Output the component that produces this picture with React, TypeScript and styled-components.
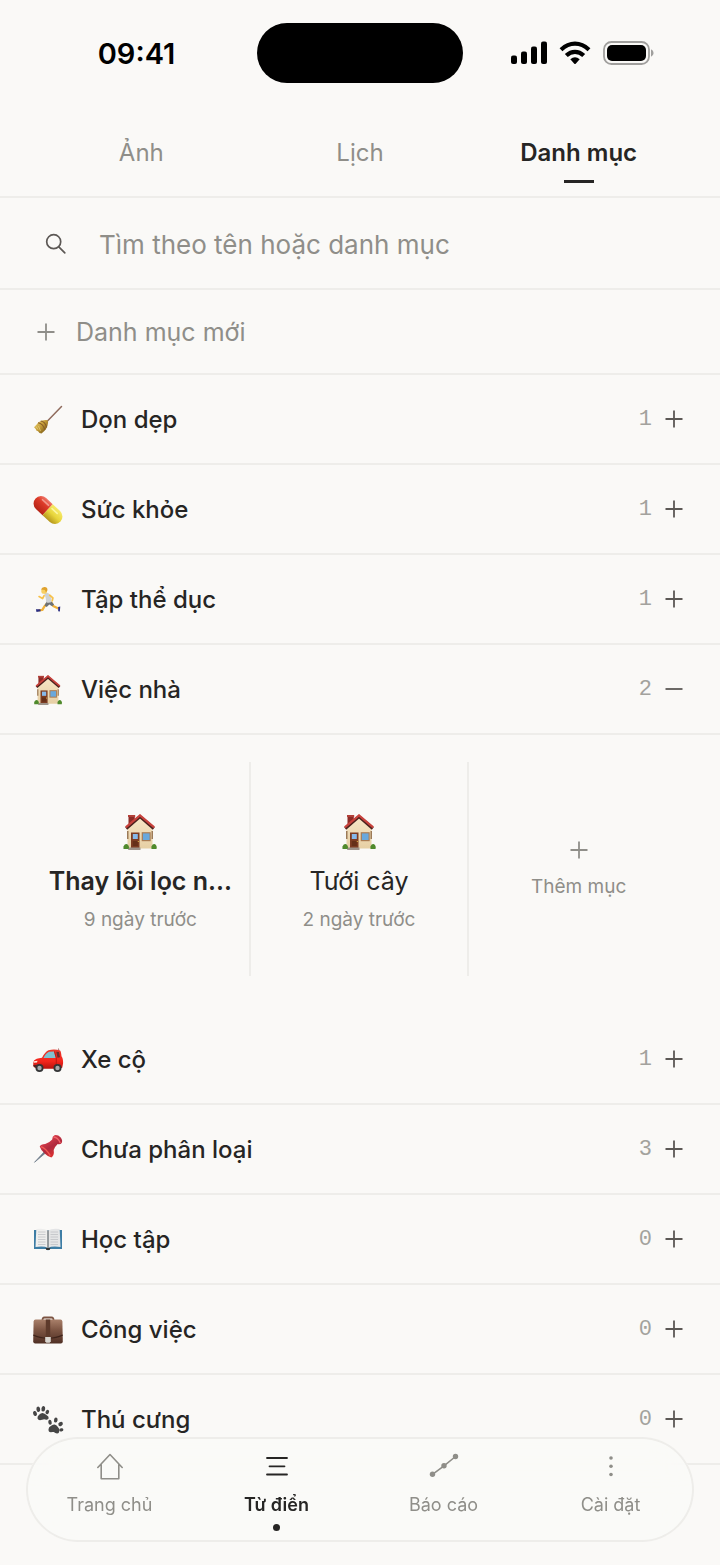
import React, { useId, useState } from "react";
import styled, { createGlobalStyle, css } from "styled-components";

const color = {
  page: "#faf9f7",
  line: "#eeedea",
  ink: "#262524",
  muted: "#8f8e89",
  icon: "#5c5855",
};

const GlobalStyle = createGlobalStyle`
  *, *::before, *::after { box-sizing: border-box; }
  body {
    margin: 0;
    background: ${color.page};
    color: ${color.ink};
    font-family: Inter, "Liberation Sans", sans-serif;
    font-size: 24px;
    line-height: 32px;
  }
  button, input { font: inherit; color: inherit; }
  button { padding: 0; border: 0; background: none; cursor: pointer; }
  ul { list-style: none; margin: 0; padding: 0; }
  svg { display: block; flex: none; }
`;

const Page = styled.div`
  display: flex;
  flex-direction: column;
  min-height: 100vh;
  padding-bottom: 100px;
`;

const StatusBar = styled.header`
  display: grid;
  grid-template-columns: 1fr auto 1fr;
  align-items: center;
  justify-items: center;
  padding: 23px 18px 24px;
  color: #000;
`;

const Clock = styled.time`
  padding: 2px 2px 0 0;
  font-size: 29px;
  font-weight: 600;
`;

const Island = styled.div`
  width: 206px;
  height: 60px;
  border-radius: 30px;
  background: #000;
`;

const StatusIcons = styled.div`
  display: flex;
  align-items: center;
  gap: 12px;
`;

const Tabs = styled.nav`
  display: grid;
  grid-template-columns: repeat(3, 1fr);
  padding: 0 32px;
  border-bottom: 2px solid ${color.line};
`;

const Tab = styled.button<{ $active: boolean }>`
  display: flex;
  flex-direction: column;
  align-items: center;
  gap: 11px;
  padding: 30px 0 13px;
  color: ${(p) => (p.$active ? color.ink : color.muted)};
  font-weight: ${(p) => (p.$active ? 600 : 400)};

  &::after {
    content: "";
    width: 30px;
    height: 3px;
    background: ${(p) => (p.$active ? color.ink : "transparent")};
  }
`;

const SearchRow = styled.label`
  display: flex;
  align-items: center;
  gap: 32px;
  height: 92px;
  padding: 2px 32px 0 45px;
  border-bottom: 2px solid ${color.line};
`;

const SearchInput = styled.input`
  flex: 1;
  min-width: 0;
  padding: 2px 0 0;
  border: 0;
  outline: 0;
  background: none;
  font-size: 26px;

  &::placeholder { color: ${color.muted}; opacity: 1; }
`;

const NewCategory = styled.button`
  display: flex;
  align-items: center;
  gap: 21px;
  height: 85px;
  padding: 0 37px;
  border-bottom: 2px solid ${color.line};
  color: ${color.muted};
  font-size: 25px;
`;

const CategoryRow = styled.button`
  display: flex;
  align-items: center;
  width: 100%;
  height: 90px;
  padding: 0 37px 0 32px;
  border-bottom: 2px solid ${color.line};
  text-align: left;
`;

const CategoryLabel = styled.span`
  display: flex;
  flex: 1;
  align-items: center;
  gap: 17px;
  padding-top: 2px;
  font-weight: 500;
`;

const Pictogram = styled.span`
  display: flex;
  align-items: center;
  justify-content: center;
  width: 32px;
  height: 32px;
`;

const Count = styled.span`
  margin-right: 13px;
  padding-top: 2px;
  color: #a3a29d;
  font-family: "Liberation Mono", monospace;
  font-size: 22px;
`;

const Signs = styled.span`
  color: ${color.icon};
`;

const ItemGrid = styled.ul`
  display: grid;
  grid-template-columns: repeat(3, 1fr);
  padding: 27px 32px 39px;
`;

const ItemCell = styled.li`
  min-width: 0;
  height: 214px;

  &:not(:last-child) { border-right: 2px solid ${color.line}; }
`;

const ItemButton = styled.button`
  display: flex;
  flex-direction: column;
  align-items: center;
  justify-content: center;
  width: 100%;
  height: 100%;
  padding: 10px 12px 0;
`;

const ItemName = styled.span<{ $strong?: boolean }>`
  margin: 15px 0 9px;
  white-space: nowrap;
  font-size: 25px;
  font-weight: ${(p) => (p.$strong ? 600 : 400)};
`;

const Caption = styled.span`
  color: ${color.muted};
  font-size: 19px;
  line-height: 28px;
`;

const AddCell = styled(ItemButton)`
  gap: 14px;
  padding-top: 4px;
  color: ${color.muted};
`;

const BottomNav = styled.nav`
  position: fixed;
  right: 26px;
  bottom: 23px;
  left: 26px;
  display: grid;
  grid-template-columns: repeat(4, 1fr);
  height: 105px;
  border-radius: 53px;
  background: rgba(250, 249, 247, 0.9);
  box-shadow: inset 0 0 0 2px ${color.line};
  backdrop-filter: blur(20px);
`;

const NavItem = styled.a<{ $active?: boolean }>`
  display: flex;
  flex-direction: column;
  align-items: center;
  padding-top: 13px;
  color: ${color.muted};
  font-size: 18px;
  line-height: 24px;
  text-decoration: none;

  svg { margin-bottom: 11px; }

  ${(p) =>
    p.$active &&
    css`
      color: ${color.ink};
      font-weight: 600;

      &::after {
        content: "";
        width: 7px;
        height: 7px;
        margin-top: 7px;
        border-radius: 50%;
        background: ${color.ink};
      }
    `}
`;

/* ---------- line icons ---------- */

const Plus = ({ minus = false }: { minus?: boolean }) => (
  <svg width="18" height="18" viewBox="0 0 18 18" fill="none" stroke="currentColor" strokeWidth="1.8" aria-hidden="true">
    <path d={minus ? "M0.5 9h17" : "M0.5 9h17M9 0.5v17"} />
  </svg>
);

const SearchIcon = () => (
  <svg width="22" height="22" viewBox="0 0 22 22" fill="none" stroke={color.icon} strokeWidth="1.7" strokeLinecap="round" aria-hidden="true">
    <circle cx="8.7" cy="8.7" r="7" />
    <path d="M13.8 13.8l6 6" />
  </svg>
);

const Signal = () => (
  <svg width="36" height="24" viewBox="0 0 36 24" aria-hidden="true">
    <rect x="0" y="14.5" width="6" height="8.5" rx="2" />
    <rect x="10" y="10.5" width="6" height="12.5" rx="2" />
    <rect x="20" y="5.5" width="6" height="17.5" rx="2" />
    <rect x="30" y="0.5" width="6" height="22.5" rx="2" />
  </svg>
);

const Wifi = () => (
  <svg width="32" height="24" viewBox="0 0 32 24" fill="none" stroke="#000" strokeWidth="4.2" aria-hidden="true">
    <path d="M2 8.7Q8.5 2.7 16 2.7T30 8.7" />
    <path d="M7.3 14.6Q11.2 10.8 16 10.8T24.7 14.6" />
    <path d="M11.3 18.3Q16 14.4 20.7 18.3L16.7 22.8Q16 23.4 15.3 22.8Z" fill="#000" stroke="none" />
  </svg>
);

const Battery = () => (
  <svg width="51" height="24" viewBox="0 0 51 24" aria-hidden="true">
    <rect x="1" y="1" width="45" height="22" rx="7.5" fill="none" stroke="#a09f9d" strokeWidth="1.8" />
    <rect x="4" y="4" width="39" height="16" rx="5" />
    <path d="M48 8.3q2.6 1 2.6 3.7t-2.6 3.7z" fill="#a09f9d" />
  </svg>
);

const HomeIcon = () => (
  <svg width="28" height="32" viewBox="0 0 28 32" fill="none" stroke="currentColor" strokeWidth="1.6" strokeLinejoin="round" strokeLinecap="round" aria-hidden="true">
    <path d="M1.8 17.5L14 4.5l12.2 13M5.2 14.5v14.3h17.6V14.500" />
  </svg>
);

const ListIcon = () => (
  <svg width="28" height="32" viewBox="0 0 28 32" fill="none" stroke="currentColor" strokeWidth="1.8" strokeLinecap="round" aria-hidden="true">
    <path d="M4 8h20M6.5 16.3h15M4 24.500h20" />
  </svg>
);

const ChartIcon = () => (
  <svg width="32" height="32" viewBox="0 0 32 32" fill="currentColor" aria-hidden="true">
    <path d="M4.5 24.3L16 15.8 27.5 6.5" fill="none" stroke="currentColor" strokeWidth="1.6" />
    <circle cx="4.5" cy="24.3" r="2.7" />
    <circle cx="16" cy="15.8" r="2.7" />
    <circle cx="27.5" cy="6.5" r="2.7" />
  </svg>
);

const DotsIcon = () => (
  <svg width="28" height="32" viewBox="0 0 28 32" fill="currentColor" aria-hidden="true">
    <circle cx="14" cy="8" r="1.8" />
    <circle cx="14" cy="16.3" r="1.8" />
    <circle cx="14" cy="24.5" r="1.8" />
  </svg>
);

/* ---------- pictograms ---------- */

const Broom = () => {
  const id = useId();
  return (
    <svg width="32" height="32" viewBox="0 0 32 32" aria-hidden="true">
      <defs>
        <linearGradient id={id} x1="4" y1="18" x2="14" y2="27" gradientUnits="userSpaceOnUse">
          <stop offset="0" stopColor="#e3c765" />
          <stop offset="0.5" stopColor="#c29a36" />
          <stop offset="1" stopColor="#80601a" />
        </linearGradient>
      </defs>
      <path d="M29.5 2.500L14.5 18" stroke="#8f6b5c" strokeWidth="1.5" strokeLinecap="round" />
      <path d="M14.5 16q2.2 1 1.400 3.500-.4 5.500-6.400 10l-2-.6-1.500-1.600-1.700-.7-.6-1.600L2 23.300q2-1.800 4.500-5 3.500-2.500 8-2.300z" fill={`url(#${id})`} />
      <path d="M6 18.800q5 .8 7 7.200M8.700 17q4.500.7 6 6.500" fill="none" stroke="#8a5f2a" strokeWidth="1.1" />
      <path d="M4 22.500l2 3M6.500 22l2 5" stroke="#f2de8c" strokeWidth=".6" />
    </svg>
  );
};

const Pill = () => {
  const id = useId();
  return (
    <svg width="32" height="32" viewBox="0 0 32 32" aria-hidden="true">
      <defs>
        <linearGradient id={`${id}r`} x1="0" y1="0" x2="0" y2="1">
          <stop offset="0" stopColor="#f0786a" />
          <stop offset="0.4" stopColor="#dc3a28" />
          <stop offset="1" stopColor="#b62416" />
        </linearGradient>
        <linearGradient id={`${id}y`} x1="0" y1="0" x2="0" y2="1">
          <stop offset="0" stopColor="#f7ea6a" />
          <stop offset="0.5" stopColor="#e8d63c" />
          <stop offset="1" stopColor="#b5961c" />
        </linearGradient>
      </defs>
      <g transform="rotate(43 16 16)">
        <path d="M15.500 8.500H6.500a7.500 7.500 0 0 0 0 15h9z" fill={`url(#${id}r)`} />
        <path d="M15.500 8.500H25.500a7.500 7.500 0 0 1 0 15h-10z" fill={`url(#${id}y)`} />
        <path d="M5 12.200h8" stroke="#f39a8d" strokeWidth="1.6" strokeLinecap="round" />
        <path d="M18 12.200h7" stroke="#fbf5a0" strokeWidth="1.6" strokeLinecap="round" />
      </g>
    </svg>
  );
};

const Runner = () => (
  <svg width="32" height="32" viewBox="-3 -3 37 37" aria-hidden="true">
    <path d="M15.500 18.500l-4 4.200-2.500 4.200-4.500.6M19 18l2.500 4.500 6 2.800" fill="none" stroke="#f0b13a" strokeWidth="2.700" strokeLinejoin="round" />
    <path d="M14 17l5.500.2 3 3.600-2.200 2-3.300-2.200-3 3-2.500-1.600z" fill="#6e7276" />
    <path d="M11 8q3.500-1.800 6 .5l2.500 4.800-.5 4.900q-3 1-5.500-.2L12.800 13z" fill="#cfd2d4" />
    <path d="M11 10.500l-1.800 3.300-4-2.300M17.500 10l3.700 3-.8 3.400" fill="none" stroke="#f7c14a" strokeWidth="2" strokeLinecap="round" strokeLinejoin="round" />
    <circle cx="11" cy="5" r="3.300" fill="#f8cf63" />
    <path d="M7.500 3.500q.8-3 4-2.900 3.500.2 3.400 3.500l-1.700 2.700-1.300-2.800z" fill="#dfa22d" />
    <path d="M1.500 26.300l5-.2.7 2.500-5 .8zM27.200 23.500l2.500-.4-.5 5.600-1.900-.2z" fill="#2c2f82" />
  </svg>
);

const House = ({ size }: { size: number }) => {
  const id = useId();
  return (
    <svg width={size} height={size} viewBox="0 0 34 36" aria-hidden="true">
      <defs>
        <linearGradient id={id} x1="0" y1="0" x2="0" y2="1">
          <stop offset="0" stopColor="#f7e6c6" />
          <stop offset="1" stopColor="#e6cfa4" />
        </linearGradient>
      </defs>
      <path d="M5.500 1.500h6.300v9l-6.300 4.500z" fill="#8e2b26" />
      <path d="M5 1h7.200v2H5z" fill="#b23f38" />
      <path d="M4.500 14.500L17 3.500l12.500 11v20h-25z" fill={`url(#${id})`} />
      <path d="M4 17h1.500v8H4zM28.500 17H30v8h-1.500z" fill="#9c7b58" />
      <path d="M3.200 14.500L17 2.700l13.800 11.800" fill="none" stroke="#4c211d" strokeWidth="3" />
      <path d="M2.800 13.300L17 1.400l14.200 11.900" fill="none" stroke="#c8423c" strokeWidth="2.200" />
      <rect x="8" y="18.500" width="8.500" height="15.500" fill="#7c3c22" />
      <rect x="9.800" y="20" width="5" height="5" fill="#86b9ea" />
      <rect x="9.800" y="27" width="5" height="5" fill="#653019" />
      <circle cx="15.300" cy="27.500" r=".6" fill="#f0c84d" />
      <rect x="18.700" y="18.200" width="9" height="9" fill="#a97b52" />
      <rect x="19.900" y="19.400" width="6.700" height="6.600" fill="#69a8dc" />
      <path d="M6 33.500h11.500V36H5z" fill="#9d938a" />
      <path d="M0.500 35q-.8-3 1.300-4.500 2-1.300 3.500.8 1.300 1.800.4 3.700zM28.500 35q-.8-3 1.200-4.500 2-1.200 3.400.8 1.200 1.800.4 3.700z" fill="#4f8a2c" />
    </svg>
  );
};

const Car = () => {
  const id = useId();
  return (
    <svg width="32" height="32" viewBox="0 0 32 32" aria-hidden="true">
      <defs>
        <linearGradient id={id} x1="0" y1="0" x2="0" y2="1">
          <stop offset="0" stopColor="#e8372a" />
          <stop offset="0.6" stopColor="#f5261d" />
          <stop offset="1" stopColor="#b5120e" />
        </linearGradient>
      </defs>
      <path d="M26.500 4.500l.6 4" stroke="#8a3a36" strokeWidth=".7" />
      <path d="M2 16.500q1.500-2 8-2.800 3-6 6.500-7.500 6-1.300 11.500.2 1 .6 1.500 5.800 1.700 2 1.600 7l-.9 4.500L27 24.800H4.500L1.300 22.300q-.3-4 .7-5.800z" fill={`url(#${id})`} />
      <path d="M11.500 14q2.300-4.800 5.500-6.200l5-.2 1.800 6.400z" fill="#7fc0cf" />
      <path d="M24.300 7.800l2.700.2 1 5.300-2.500.5z" fill="#6a2b2c" />
      <path d="M22.500 7.500l1.800 6.500v8" stroke="#b91510" strokeWidth=".9" fill="none" />
      <path d="M1.300 21h4v2.200H2z" fill="#59201c" />
      <path d="M2 17.300l3.500-.6-.5 1.800-3 .3z" fill="#ffe9dc" />
      <g>
        <circle cx="7.500" cy="24" r="4" fill="#343536" />
        <circle cx="7.500" cy="24" r="2.200" fill="#a6a8aa" />
        <circle cx="25.500" cy="24" r="4" fill="#343536" />
        <circle cx="25.500" cy="24" r="2.200" fill="#a6a8aa" />
      </g>
    </svg>
  );
};

const Pushpin = () => {
  const id = useId();
  return (
    <svg width="32" height="32" viewBox="0 0 32 32" aria-hidden="true">
      <defs>
        <linearGradient id={id} x1="10" y1="6" x2="22" y2="24" gradientUnits="userSpaceOnUse">
          <stop offset="0" stopColor="#e2414c" />
          <stop offset="0.5" stopColor="#b02a3e" />
          <stop offset="1" stopColor="#e8322c" />
        </linearGradient>
      </defs>
      <path d="M12.500 17.500L2.500 28.300l11.300-9.500z" fill="#6c7a88" stroke="#6c7a88" strokeWidth=".7" />
      <path d="M7.700 12.500q1-2.500 5.500-2.600 4.500-1.300 7-4.400 0-3.200 2.300-4.300 3.500-.6 6 2.100 2.500 2.900 1.200 5.700-1.500 1.700-4 1-3.200 3-4 6 .8 5.500-2.300 7.400-3-.2-6.500-3.600-4.200-3.800-5.200-7.300z" fill={`url(#${id})`} />
      <path d="M21.500 3q4.500.3 6.800 6" fill="none" stroke="#f1656a" strokeWidth="1.300" />
      <path d="M9 12.700q5 1.800 9.300 9" fill="none" stroke="#f25b55" strokeWidth="1.400" />
    </svg>
  );
};

const Book = () => (
  <svg width="32" height="32" viewBox="0 0 32 32" aria-hidden="true">
    <path d="M2 6h28v19H17.500L16 26.500 14.500 25H2z" fill="#3d7da5" />
    <path d="M13.500 23.800h5l-.8 2.200h-3.400z" fill="#303536" />
    <path d="M4.300 5Q12 4 16 6.500v17.500q-4-2.300-12.500-1z" fill="#eeeeed" />
    <path d="M27.700 5Q20 4 16 6.500v17.500q4-2.300 12.500-1z" fill="#e4e5e6" />
    <path d="M16 6.500v17.500" stroke="#7a8084" strokeWidth="1.500" />
    <path d="M6 8h7.500M6 10.500h7.500M6 13h7.500M6 15.500h7.500M6 18h7.500M6 20.500h7.500M18.500 8H26M18.500 10.500H26M18.500 13H26M18.500 15.500H26M18.500 18H26M18.500 20.500H26" stroke="#bfc2c5" strokeWidth=".8" />
  </svg>
);

const Briefcase = () => {
  const id = useId();
  return (
    <svg width="32" height="32" viewBox="0 0 32 32" aria-hidden="true">
      <defs>
        <linearGradient id={id} x1="0" y1="0" x2="0" y2="1">
          <stop offset="0" stopColor="#a9806a" />
          <stop offset="0.45" stopColor="#7c5442" />
          <stop offset="1" stopColor="#4f2f24" />
        </linearGradient>
      </defs>
      <path d="M10.500 6.500q-.2-3 2-3h7q2.200 0 2 3" fill="none" stroke="#7c5442" strokeWidth="1.800" />
      <path d="M3.500 5.500h25q1.700.2 1.900 2l.4 20q-.1 2-2 2.100H3.200q-1.900-.1-2-2.100l.4-20q.2-1.800 1.900-2z" fill={`url(#${id})`} />
      <path d="M1.300 21q6 3.200 14.700 3.200t14.700-3.200" fill="none" stroke="#3f241b" strokeWidth="1.200" />
      <path d="M13.800 5.500h4.400v17.500h-4.400z" fill="#5d3a2b" />
      <path d="M13.200 23h5.600v4.500l-1.200 1.300h-3.200l-1.200-1.300z" fill="#d9d6d0" />
    </svg>
  );
};

const Paws = () => (
  <svg width="32" height="32" viewBox="0 0 32 32" fill="#464646" aria-hidden="true">
    <path d="M5.500 14.500q-.4-1.900 1.600-3.700 1.600-1.900 3.500-1.900 2.200.2 3.800 2.100 2.600 1.400 2.300 3.300-.8 1.900-3.400 1.100-1.700-.4-3.200.4-3.600 1.300-4.600-1.300z" />
    <ellipse cx="3" cy="9.500" rx="1.900" ry="2.600" transform="rotate(-18 3 9.500)" />
    <ellipse cx="6.300" cy="5.200" rx="1.900" ry="2.800" transform="rotate(-8 6.300 5.200)" />
    <ellipse cx="11.300" cy="4.700" rx="1.900" ry="2.800" transform="rotate(8 11.300 4.700)" />
    <ellipse cx="15.300" cy="8" rx="1.700" ry="2.300" transform="rotate(25 15.300 8)" />
    <path d="M16.500 25.200q.2-2 2.300-3.100 1.800-1.900 3.700-1.700 2 .3 3.200 2.300 2 1.700 1.600 4.300-.2 2.800-2.300 2.600-1.700-.5-3.200-1.500-1.500-.3-3 .1-2.500-.2-2.300-3z" />
    <ellipse cx="18" cy="18.300" rx="1.700" ry="2.500" transform="rotate(-12 18 18.300)" />
    <ellipse cx="23.800" cy="16" rx="1.800" ry="2.600" transform="rotate(10 23.800 16)" />
    <ellipse cx="28.600" cy="20" rx="2.400" ry="1.900" transform="rotate(-30 28.600 20)" />
    <ellipse cx="29.300" cy="25.800" rx="2.100" ry="1.600" transform="rotate(-10 29.300 25.800)" />
  </svg>
);

/* ---------- data ---------- */

interface Category {
  name: string;
  count: number;
  icon: React.ReactNode;
}

const categories: Category[] = [
  { name: "Dọn dẹp", count: 1, icon: <Broom /> },
  { name: "Sức khỏe", count: 1, icon: <Pill /> },
  { name: "Tập thể dục", count: 1, icon: <Runner /> },
  { name: "Việc nhà", count: 2, icon: <House size={30} /> },
  { name: "Xe cộ", count: 1, icon: <Car /> },
  { name: "Chưa phân loại", count: 3, icon: <Pushpin /> },
  { name: "Học tập", count: 0, icon: <Book /> },
  { name: "Công việc", count: 0, icon: <Briefcase /> },
  { name: "Thú cưng", count: 0, icon: <Paws /> },
];

const houseItems = [
  { name: "Thay lõi lọc n...", when: "9 ngày trước", overdue: true },
  { name: "Tưới cây", when: "2 ngày trước", overdue: false },
];

const tabs = ["Ảnh", "Lịch", "Danh mục"];

const navItems = [
  { label: "Trang chủ", icon: <HomeIcon /> },
  { label: "Từ điển", icon: <ListIcon />, active: true },
  { label: "Báo cáo", icon: <ChartIcon /> },
  { label: "Cài đặt", icon: <DotsIcon /> },
];

export default function App() {
  const [tab, setTab] = useState("Danh mục");
  const [open, setOpen] = useState("Việc nhà");

  return (
    <Page>
      <GlobalStyle />
      <StatusBar>
        <Clock>09:41</Clock>
        <Island />
        <StatusIcons>
          <Signal />
          <Wifi />
          <Battery />
        </StatusIcons>
      </StatusBar>

      <Tabs>
        {tabs.map((name) => (
          <Tab key={name} type="button" $active={name === tab} onClick={() => setTab(name)}>
            {name}
          </Tab>
        ))}
      </Tabs>

      <SearchRow>
        <SearchIcon />
        <SearchInput type="text" aria-label="Tìm kiếm" placeholder="Tìm theo tên hoặc danh mục" />
      </SearchRow>

      <NewCategory type="button">
        <Plus />
        Danh mục mới
      </NewCategory>

      <ul>
        {categories.map(({ name, count, icon }) => {
          const expanded = name === open;
          return (
            <li key={name}>
              <CategoryRow type="button" aria-expanded={expanded} onClick={() => setOpen(expanded ? "" : name)}>
                <CategoryLabel>
                  <Pictogram>{icon}</Pictogram>
                  {name}
                </CategoryLabel>
                <Count>{count}</Count>
                <Signs>
                  <Plus minus={expanded} />
                </Signs>
              </CategoryRow>
              {expanded && (
                <ItemGrid>
                  {name === "Việc nhà" &&
                    houseItems.map((item) => (
                      <ItemCell key={item.name}>
                        <ItemButton type="button">
                          <House size={36} />
                          <ItemName $strong={item.overdue}>{item.name}</ItemName>
                          <Caption>{item.when}</Caption>
                        </ItemButton>
                      </ItemCell>
                    ))}
                  <ItemCell>
                    <AddCell type="button">
                      <Plus />
                      <Caption>Thêm mục</Caption>
                    </AddCell>
                  </ItemCell>
                </ItemGrid>
              )}
            </li>
          );
        })}
      </ul>

      <BottomNav>
        {navItems.map(({ label, icon, active }) => (
          <NavItem key={label} href="#" $active={active}>
            {icon}
            {label}
          </NavItem>
        ))}
      </BottomNav>
    </Page>
  );
}
